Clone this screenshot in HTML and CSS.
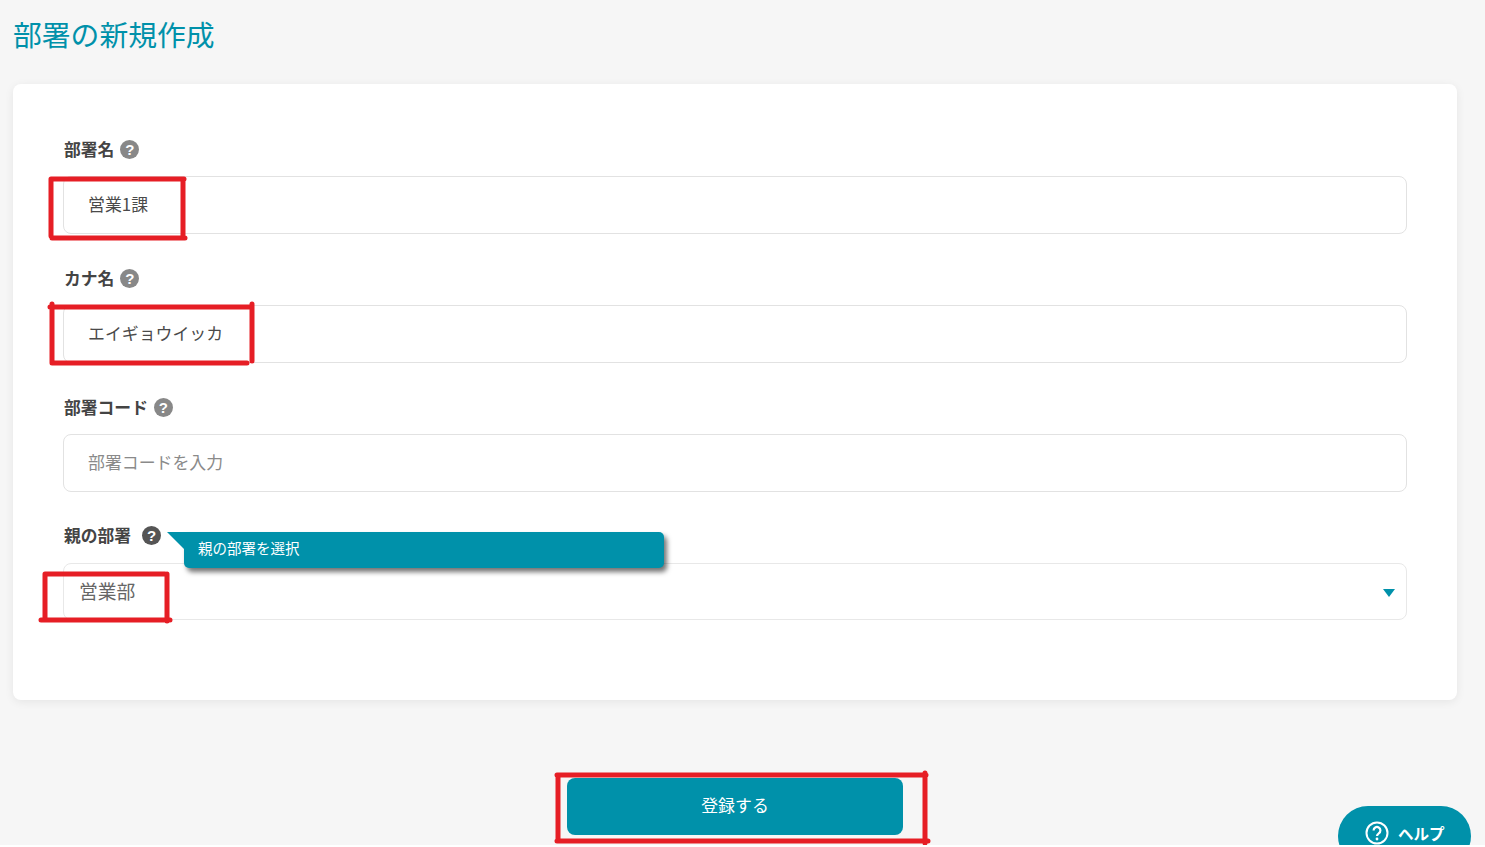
FILE: index.html
```html
<!DOCTYPE html>
<html lang="ja">

<head>
    <meta charset="UTF-8">
    <meta name="viewport" content="width=device-width, initial-scale=1.0">
    <title>部署の新規作成</title>
    <link rel="stylesheet" href="styles.css">
</head>

<body>
    <div class="page">
        <h1 class="title">部署の新規作成</h1>

        <form class="card">
            <div class="field">
                <div class="label">部署名 <span class="hint">?</span></div>
                <input class="text-input" type="text" value="営業1課">
            </div>
            <div class="field">
                <div class="label">カナ名 <span class="hint">?</span></div>
                <input class="text-input" type="text" value="エイギョウイッカ">
            </div>
            <div class="field">
                <div class="label">部署コード <span class="hint">?</span></div>
                <input class="text-input" type="text" placeholder="部署コードを入力">
            </div>
            <div class="field field-select">
                <div class="label">親の部署 <span class="hint hint-dark">?</span></div>
                <div class="select-box">
                    <span>営業部</span>
                    <i class="select-arrow"></i>
                </div>
                <div class="tooltip">親の部署を選択</div>
            </div>
        </form>

        <div class="actions">
            <button class="submit" type="button">登録する</button>
        </div>

        <a class="help" href="#">
            <svg class="help-icon" viewBox="0 0 24 24" width="24" height="24">
                <circle cx="12" cy="12" r="10.5" fill="none" stroke="#fff" stroke-width="2"></circle>
                <path d="M8.6 9.4a3.4 3.4 0 1 1 5.2 2.9c-1.2.8-1.8 1.4-1.8 2.7" fill="none" stroke="#fff" stroke-width="2.2"></path>
                <circle cx="12" cy="18" r="1.4" fill="#fff"></circle>
            </svg>
            ヘルプ
        </a>

        <!-- 赤枠の注釈 -->
        <svg class="marks" viewBox="0 0 1485 845" width="1485" height="845">
            <path d="M51 179H184M51 179V236M183 179V238M52 238H185"></path>
            <path d="M50 307H252M52 304V363M252 304V361M52 363H247"></path>
            <path d="M45 574H165M45 574V620M167 574V621M41 620H170"></path>
            <path d="M557 775H926M558 775V841M925 773V843M557 841H928"></path>
        </svg>
    </div>
</body>

</html>
```

FILE: styles.css
```css
* {
    margin: 0;
    padding: 0;
    box-sizing: border-box;
}

html,
body {
    background-color: #fff;
    font-family: "Noto Sans CJK JP", "Noto Sans", sans-serif;
    color: #4a4a4a;
}

.page {
    position: relative;
    height: 845px;
    overflow: hidden;
    background-color: #f6f6f6;
    padding: 14px 28px 0 13px;
}

.title {
    font-size: 28.8px;
    font-weight: 400;
    line-height: 40px;
    color: #0091aa;
}

.card {
    margin-top: 30px;
    height: 616px;
    padding: 49px 50px 0;
    background-color: #fff;
    border-radius: 8px;
    box-shadow: 0 2px 10px rgba(0, 0, 0, 0.07);
}

.field {
    position: relative;
    height: 129px;
}

.label {
    display: flex;
    align-items: center;
    gap: 6px;
    height: 30px;
    padding: 2px 0 0 1px;
    font-size: 16.8px;
    font-weight: 700;
    color: #444;
    margin-bottom: 13px;
}

.field-select .label {
    padding-top: 0;
}

.hint {
    width: 19px;
    height: 19px;
    border-radius: 50%;
    background-color: #888;
    color: #fff;
    font-size: 15px;
    font-weight: 700;
    line-height: 19px;
    text-align: center;
    font-family: "Liberation Sans", sans-serif;
}

.hint-dark {
    background-color: #555;
    margin-left: 5px;
}

.text-input {
    display: block;
    width: 100%;
    height: 58px;
    padding: 0 24px 3px;
    border: 1px solid #e2e2e2;
    border-radius: 8px;
    background-color: #fff;
    font-family: inherit;
    font-size: 16.9px;
    color: #4a4a4a;
}

.text-input::placeholder {
    color: #8a8a8a;
    opacity: 1;
}

.select-box {
    display: flex;
    align-items: center;
    justify-content: space-between;
    height: 57px;
    padding: 0 11px 0 15px;
    border: 1px solid #e8e8e8;
    border-radius: 8px;
    font-size: 18.8px;
    color: #666;
}

.select-box span {
    margin-top: -3px;
}

.select-arrow {
    width: 0;
    height: 0;
    margin-top: 2px;
    border-left: 6.5px solid transparent;
    border-right: 6.5px solid transparent;
    border-top: 8px solid #0091aa;
}

.tooltip {
    position: absolute;
    left: 121px;
    top: 12px;
    width: 480px;
    height: 36px;
    padding-left: 14px;
    line-height: 32px;
    font-size: 14.5px;
    color: #fff;
    background-color: #0091aa;
    border-radius: 0 5px 5px 5px;
    box-shadow: 3px 4px 5px rgba(0, 0, 0, 0.55);
}

.tooltip::before {
    content: "";
    position: absolute;
    left: -17px;
    top: 0;
    border-top: 17px solid #0091aa;
    border-left: 17px solid transparent;
}

.actions {
    display: flex;
    justify-content: center;
    margin-top: 78px;
}

.submit {
    width: 336px;
    height: 57px;
    padding-bottom: 4px;
    border: none;
    border-radius: 8px;
    background-color: #0091aa;
    color: #fff;
    font-family: inherit;
    font-size: 16.9px;
}

.help {
    position: absolute;
    left: 1338px;
    top: 806px;
    width: 133px;
    height: 60px;
    display: flex;
    align-items: flex-start;
    gap: 9px;
    padding: 15px 0 0 27px;
    border-radius: 30px;
    background-color: #0091aa;
    color: #fff;
    font-size: 15.5px;
    font-weight: 700;
    line-height: 24px;
    text-decoration: none;
}

.help-icon {
    flex: none;
}

.marks {
    position: absolute;
    left: 0;
    top: 0;
    fill: none;
    stroke: #e61e25;
    stroke-width: 5;
    stroke-linecap: round;
}
```
